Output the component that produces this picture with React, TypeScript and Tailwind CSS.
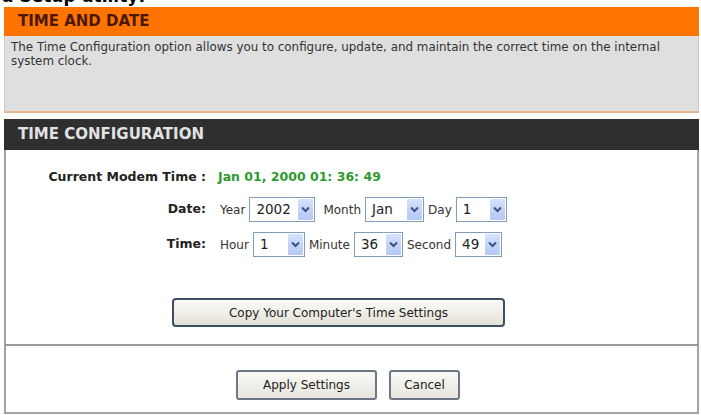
import React from 'react';

const Chevron = () => (
  <svg width="9" height="7" viewBox="0 0 9 7">
    <path d="M1 1.5 L4.5 5 L8 1.5" fill="none" stroke="#3b5283" strokeWidth="2" />
  </svg>
);

const Select = ({ value, width }: { value: string; width: string }) => (
  <div className={`flex h-[25px] items-stretch border border-[#7f9db9] bg-white ${width}`}>
    <span className="flex-1 pl-[6px] text-[13.5px] leading-[23px] text-[#222]">{value}</span>
    <span className="m-[1px] flex w-[15px] items-center justify-center rounded-[1px] bg-gradient-to-b from-[#d6e2fd] to-[#b3c8f5]">
      <Chevron />
    </span>
  </div>
);

const Field = ({ label, children }: { label: string; children: React.ReactNode }) => (
  <div className="flex items-center">
    <span className="w-[200px] text-right text-[12.5px] font-bold text-[#222]">{label}</span>
    <div className="ml-[14px] flex items-center gap-[4px] text-[12px] text-[#333]">{children}</div>
  </div>
);

export default function App() {
  return (
    <div className="h-[415px] w-[701px] overflow-hidden bg-white font-['DejaVu_Sans',sans-serif]">
      <div className="h-[7px] overflow-hidden">
        <div className="-mt-[14px] pl-[2px] text-[17px] font-bold leading-[20px] text-black">a Setup utility:</div>
      </div>
      <div className="ml-[4px] mr-[2px]">
        <div className="flex h-[29px] items-center bg-[#ff7400] pl-[14px] text-[15px] font-bold text-[#4a1800]">
          TIME AND DATE
        </div>
        <div className="h-[77px] border-x border-b-2 border-x-[#c9c9c9] border-b-[#e9b58a] bg-[#dfdfdf] px-[6px] pt-[4px] text-[11.9px] leading-[14px] text-[#333]">
          The Time Configuration option allows you to configure, update, and maintain the correct time on the internal
          <br />
          system clock.
        </div>
        <div className="h-[6px]" />
        <div className="flex h-[31px] items-center bg-[#2f2f2f] pl-[14px] text-[15px] font-bold text-[#e2e2e2]">
          TIME CONFIGURATION
        </div>
        <div className="h-[194px] border-x-2 border-[#a3a3a3] pt-[17px]">
          <div className="flex h-[20px] items-center">
            <span className="w-[200px] text-right text-[12.5px] font-bold text-[#222]">Current Modem Time :</span>
            <span className="ml-[12px] text-[12.5px] font-bold text-[#2e9a2e]">Jan 01, 2000 01: 36: 49</span>
          </div>
          <div className="mt-[10px]">
            <Field label="Date:">
              <span>Year</span>
              <Select value="2002" width="w-[66px]" />
              <span className="ml-[4px]">Month</span>
              <Select value="Jan" width="w-[59px]" />
              <span>Day</span>
              <Select value="1" width="w-[51px]" />
            </Field>
          </div>
          <div className="mt-[10px]">
            <Field label="Time:">
              <span>Hour</span>
              <Select value="1" width="w-[52px]" />
              <span>Minute</span>
              <Select value="36" width="w-[49px]" />
              <span>Second</span>
              <Select value="49" width="w-[47px]" />
            </Field>
          </div>
          <button className="ml-[166px] mt-[41px] h-[29px] w-[333px] rounded-[4px] border-2 border-[#3d4f63] bg-gradient-to-b from-[#fbfbf8] to-[#e4e1d6] text-[12px] text-[#222]">
            Copy Your Computer&apos;s Time Settings
          </button>
        </div>
        <div className="h-[2px] bg-[#9a9a9a]" />
        <div className="flex h-[68px] gap-[12px] border-x-2 border-b-2 border-[#a3a3a3] pl-[230px] pt-[24px]">
          <button className="h-[30px] w-[141px] rounded-[3px] border-2 border-[#6c7886] bg-gradient-to-b from-[#fafaf7] to-[#e6e4dc] text-[12px] text-[#222]">
            Apply Settings
          </button>
          <button className="h-[30px] w-[71px] rounded-[3px] border-2 border-[#6c7886] bg-gradient-to-b from-[#fafaf7] to-[#e6e4dc] text-[12px] text-[#222]">
            Cancel
          </button>
        </div>
      </div>
    </div>
  );
}
